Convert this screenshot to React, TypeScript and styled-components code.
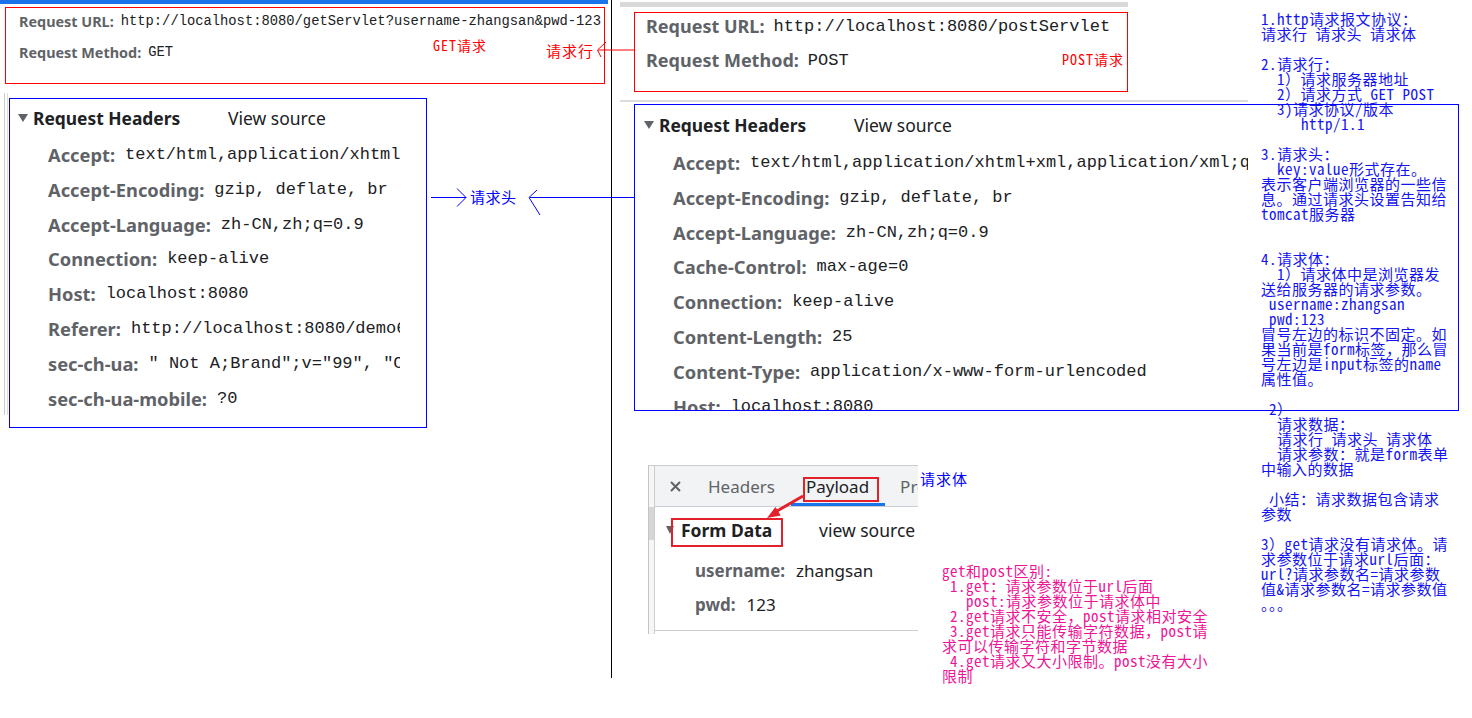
import React from 'react';
import styled, { createGlobalStyle } from 'styled-components';

const UI = `"Noto Sans", "Open Sans", sans-serif`;
const MONO = `"Liberation Mono", "DejaVu Sans Mono", monospace`;
const NOTE = `"Noto Sans Mono CJK SC", "Noto Sans CJK SC", monospace`;

const GlobalStyle = createGlobalStyle`
  html, body { margin: 0; padding: 0; background: #ffffff; }
  body { width: 1472px; height: 718px; overflow: hidden; }
`;

const Canvas = styled.main`
  position: relative;
  width: 1472px;
  height: 718px;
  overflow: hidden;
  background: #fff;
  font-family: ${UI};
`;

/* ---------- request line screenshots ---------- */

const GetUrlShot = styled.section`
  position: absolute;
  left: 0;
  top: 0;
  width: 608px;
  box-sizing: border-box;
  border-top: 4px solid #1a73e8;
  padding: 3px 0 0 5px;
`;

const PostUrlShot = styled.section`
  position: absolute;
  left: 620px;
  top: 2px;
  width: 508px;
  box-sizing: border-box;
  border-top: 5px solid #d9d9d9;
  padding: 5px 0 0 14px;
`;

const UrlFrame = styled.div<{ $small?: boolean }>`
  width: ${p => (p.$small ? 600 : 494)}px;
  height: ${p => (p.$small ? 77 : 80)}px;
  box-sizing: border-box;
  border: 1px solid #ff0000;
  padding: ${p => (p.$small ? '3px 0 0 13px' : '2px 0 0 11px')};
  display: flex;
  flex-direction: column;
  gap: ${p => (p.$small ? 11 : 12)}px;
`;

const UrlRow = styled.div<{ $small?: boolean }>`
  display: flex;
  align-items: center;
  height: ${p => (p.$small ? 20 : 22)}px;
  gap: ${p => (p.$small ? 7 : 9)}px;
  white-space: nowrap;
`;

const UrlLabel = styled.span<{ $small?: boolean }>`
  font: 700 ${p => (p.$small ? 14.4 : 18)}px ${UI};
  color: #5f6368;
`;

const UrlValue = styled.span<{ $small?: boolean }>`
  font: 400 ${p => (p.$small ? 13.8 : 17)}px ${MONO};
  color: #202124;
`;

/* ---------- request headers screenshots ---------- */

const Gutter = styled.div`
  position: absolute;
  left: 4px;
  top: 93px;
  width: 2px;
  height: 322px;
  border-left: 1px solid #c9c9c9;
  border-right: 1px solid #dedede;
`;

const PostEdge = styled.div`
  position: absolute;
  left: 620px;
  top: 100px;
  width: 628px;
  height: 2px;
  background: #dcdcdc;
`;

const HeadersFrame = styled.section<{ $post?: boolean }>`
  position: absolute;
  left: ${p => (p.$post ? 634 : 9)}px;
  top: ${p => (p.$post ? 104 : 98)}px;
  width: ${p => (p.$post ? 825 : 418)}px;
  height: ${p => (p.$post ? 307 : 330)}px;
  box-sizing: border-box;
  border: 1px solid #0000ff;
  overflow: hidden;
`;

const HeadingRow = styled.div<{ $h: number; $pad: number }>`
  display: flex;
  align-items: center;
  height: ${p => p.$h}px;
  padding-left: ${p => p.$pad}px;
  white-space: nowrap;
`;

const Caret = styled.span<{ $w: number; $gap?: number }>`
  width: 0;
  height: 0;
  border-left: ${p => p.$w / 2}px solid transparent;
  border-right: ${p => p.$w / 2}px solid transparent;
  border-top: 8px solid #5f6368;
  margin-right: ${p => p.$gap ?? 5}px;
`;

const SectionTitle = styled.span<{ $w: number }>`
  width: ${p => p.$w}px;
  font: 700 17.4px ${UI};
  color: #202124;
`;

const SourceLink = styled.span`
  font: 400 17.5px ${UI};
  color: #202124;
`;

const HeaderRow = styled.div<{ $w: number }>`
  display: flex;
  align-items: center;
  height: 34.85px;
  width: ${p => p.$w}px;
  padding-left: 38px;
  box-sizing: border-box;
  gap: 10px;
  white-space: nowrap;
  overflow: hidden;
`;

const HeaderName = styled.span`
  font: 700 18.3px ${UI};
  color: #5f6368;
  flex: none;
`;

const HeaderValue = styled.span`
  font: 400 17px ${MONO};
  color: #202124;
`;

/* ---------- payload screenshot ---------- */

const PayloadShot = styled.section`
  position: absolute;
  left: 648px;
  top: 465px;
  width: 270px;
  height: 168px;
  display: flex;
  border-top: 1px solid #cacdd1;
  overflow: hidden;
`;

const ScrollTrack = styled.div`
  width: 7px;
  flex: none;
  border-left: 1px solid #c4c4c4;
  border-right: 1px solid #cacdd1;
  background: #f6f6f6;
  padding-top: 41px;
  box-sizing: border-box;
`;

const ScrollThumb = styled.div`
  height: 33px;
  background: #d6d6d6;
`;

const PayloadMain = styled.div`
  flex: 1;
  min-width: 0;
  display: flex;
  flex-direction: column;
`;

const TabBar = styled.div`
  display: flex;
  align-items: stretch;
  height: 41px;
  box-sizing: border-box;
  background: #f1f3f4;
  border-bottom: 1px solid #cacdd1;
  padding-left: 15px;
  white-space: nowrap;
  overflow: hidden;
`;

const CloseBtn = styled.span`
  display: flex;
  align-items: center;
  margin-right: 12px;
`;

const Tab = styled.span<{ $active?: boolean }>`
  display: flex;
  align-items: center;
  padding: 3px 16px 0 15px;
  font: 400 17px ${UI};
  color: ${p => (p.$active ? '#202124' : '#5f6368')};
  border-bottom: 3px solid ${p => (p.$active ? '#1a73e8' : 'transparent')};
`;

const FormBody = styled.div`
  padding-bottom: 9px;
  border-bottom: 1px solid #cacdd1;
`;

const FormTitle = styled(SectionTitle)`
  font-size: 17.5px;
`;

const FieldRow = styled.div`
  display: flex;
  align-items: center;
  height: 34px;
  padding-left: 40px;
  gap: 11px;
  white-space: nowrap;
`;

const FieldName = styled.span`
  font: 700 17px ${UI};
  color: #5f6368;
`;

const FieldValue = styled.span`
  font: 400 17px ${UI};
  color: #202124;
`;

/* ---------- annotations ---------- */

const Divider = styled.div`
  position: absolute;
  left: 611px;
  top: 0;
  width: 1px;
  height: 678px;
  background: #000;
`;

const Annotation = styled.span<{ $x: number; $y: number; $color: string; $size: number; $spacing: number }>`
  position: absolute;
  left: ${p => p.$x}px;
  top: ${p => p.$y}px;
  font: 400 ${p => p.$size}px ${NOTE};
  letter-spacing: ${p => p.$spacing}px;
  line-height: 16px;
  color: ${p => p.$color};
  white-space: pre;
`;

const MarkBox = styled.div<{ $x: number; $y: number; $w: number; $h: number }>`
  position: absolute;
  left: ${p => p.$x}px;
  top: ${p => p.$y}px;
  width: ${p => p.$w}px;
  height: ${p => p.$h}px;
  box-sizing: border-box;
  border: 2px solid #e3212b;
`;

const Connector = styled.svg<{ $x: number; $y: number }>`
  position: absolute;
  left: ${p => p.$x}px;
  top: ${p => p.$y}px;
  overflow: visible;
`;

const NoteBlock = styled.pre<{ $x: number; $y: number; $color: string }>`
  position: absolute;
  left: ${p => p.$x}px;
  top: ${p => p.$y}px;
  margin: 0;
  font: 400 15px ${NOTE};
  letter-spacing: 0.5px;
  line-height: 15px;
  color: ${p => p.$color};
  white-space: pre;
`;

const getHeaders: [string, string][] = [
  ['Accept:', 'text/html,application/xhtml+xml,application/xml;q=0.9'],
  ['Accept-Encoding:', 'gzip, deflate, br'],
  ['Accept-Language:', 'zh-CN,zh;q=0.9'],
  ['Connection:', 'keep-alive'],
  ['Host:', 'localhost:8080'],
  ['Referer:', 'http://localhost:8080/demo6/'],
  ['sec-ch-ua:', '" Not A;Brand";v="99", "Chromium";v="100"'],
  ['sec-ch-ua-mobile:', '?0'],
];

const postHeaders: [string, string][] = [
  ['Accept:', 'text/html,application/xhtml+xml,application/xml;q=0.9,image/avif,image/webp'],
  ['Accept-Encoding:', 'gzip, deflate, br'],
  ['Accept-Language:', 'zh-CN,zh;q=0.9'],
  ['Cache-Control:', 'max-age=0'],
  ['Connection:', 'keep-alive'],
  ['Content-Length:', '25'],
  ['Content-Type:', 'application/x-www-form-urlencoded'],
  ['Host:', 'localhost:8080'],
];

const notes = `1.http请求报文协议：
请求行 请求头 请求体

2.请求行：
  1）请求服务器地址
  2）请求方式 GET POST
  3)请求协议/版本
     http/1.1

3.请求头：
  key:value形式存在。
表示客户端浏览器的一些信
息。通过请求头设置告知给
tomcat服务器


4.请求体：
  1）请求体中是浏览器发
送给服务器的请求参数。
 username:zhangsan
 pwd:123
冒号左边的标识不固定。如
果当前是form标签，那么冒
号左边是input标签的name
属性值。

 2）
  请求数据：
  请求行 请求头 请求体
  请求参数：就是form表单
中输入的数据

 小结：请求数据包含请求
参数

3）get请求没有请求体。请
求参数位于请求url后面：
url?请求参数名=请求参数
值&请求参数名=请求参数值
。。。`;

const diffNote = `get和post区别:
 1.get：请求参数位于url后面
   post:请求参数位于请求体中
 2.get请求不安全，post请求相对安全
 3.get请求只能传输字符数据，post请
求可以传输字符和字节数据
 4.get请求又大小限制。post没有大小
限制`;

const HeadersPanel: React.FC<{ post?: boolean; rows: [string, string][] }> = ({ post, rows }) => (
  <HeadersFrame $post={post}>
    <HeadingRow $h={post ? 40 : 38} $pad={post ? 9 : 8}>
      <Caret $w={10} />
      <SectionTitle $w={195}>Request Headers</SectionTitle>
      <SourceLink>View source</SourceLink>
    </HeadingRow>
    {rows.map(([k, v]) => (
      <HeaderRow key={k} $w={post ? 613 : 390}>
        <HeaderName>{k}</HeaderName>
        <HeaderValue>{v}</HeaderValue>
      </HeaderRow>
    ))}
  </HeadersFrame>
);

export default function App() {
  return (
    <Canvas>
      <GlobalStyle />

      <GetUrlShot>
        <UrlFrame $small>
          <UrlRow $small>
            <UrlLabel $small>Request URL:</UrlLabel>
            <UrlValue $small>http://localhost:8080/getServlet?username-zhangsan&amp;pwd-123</UrlValue>
          </UrlRow>
          <UrlRow $small>
            <UrlLabel $small>Request Method:</UrlLabel>
            <UrlValue $small>GET</UrlValue>
          </UrlRow>
        </UrlFrame>
      </GetUrlShot>

      <PostUrlShot>
        <UrlFrame>
          <UrlRow>
            <UrlLabel>Request URL:</UrlLabel>
            <UrlValue>http://localhost:8080/postServlet</UrlValue>
          </UrlRow>
          <UrlRow>
            <UrlLabel>Request Method:</UrlLabel>
            <UrlValue>POST</UrlValue>
          </UrlRow>
        </UrlFrame>
      </PostUrlShot>

      <Divider />

      <Gutter />
      <HeadersPanel rows={getHeaders} />
      <PostEdge />
      <HeadersPanel post rows={postHeaders} />

      <PayloadShot>
        <ScrollTrack>
          <ScrollThumb />
        </ScrollTrack>
        <PayloadMain>
          <TabBar>
            <CloseBtn>
              <svg width="11" height="11" viewBox="0 0 11 11">
                <path d="M1 1L10 10M10 1L1 10" stroke="#5f6368" strokeWidth="2" />
              </svg>
            </CloseBtn>
            <Tab>Headers</Tab>
            <Tab $active>Payload</Tab>
            <Tab>Preview</Tab>
          </TabBar>
          <FormBody>
            <HeadingRow $h={46} $pad={11}>
              <Caret $w={8} $gap={7} />
              <FormTitle $w={138}>Form Data</FormTitle>
              <SourceLink>view source</SourceLink>
            </HeadingRow>
            <FieldRow>
              <FieldName>username:</FieldName>
              <FieldValue>zhangsan</FieldValue>
            </FieldRow>
            <FieldRow>
              <FieldName>pwd:</FieldName>
              <FieldValue>123</FieldValue>
            </FieldRow>
          </FormBody>
        </PayloadMain>
      </PayloadShot>

      <MarkBox $x={803} $y={477} $w={76} $h={25} />
      <MarkBox $x={671} $y={518} $w={112} $h={29} />

      <Connector $x={760} $y={490} width="50" height="32" viewBox="0 0 50 32">
        <path d="M43 6L17 21" stroke="#e3212b" strokeWidth="3" fill="none" />
        <path d="M7 28L20.7 25.5L15.5 16.9Z" fill="#e3212b" />
      </Connector>

      <Connector $x={594} $y={38} width="42" height="24" viewBox="0 0 42 24">
        <path d="M4 12H40" stroke="#ff0000" strokeWidth="1" fill="none" />
        <path d="M12 4L3.5 12L7 19" stroke="#ff0000" strokeWidth="1" fill="none" />
      </Connector>

      <Connector $x={428} $y={185} width="210" height="35" viewBox="0 0 210 35">
        <path d="M3 12.5H38" stroke="#0000ff" strokeWidth="1" fill="none" />
        <path d="M29 3.5L38 12.5L29 21.5" stroke="#0000ff" strokeWidth="1" fill="none" />
        <path d="M102 12.5H206" stroke="#0000ff" strokeWidth="1" fill="none" />
        <path d="M109 5L101 12.5L112 30" stroke="#0000ff" strokeWidth="1" fill="none" />
      </Connector>

      <Annotation $x={433} $y={37} $color="#ff0000" $size={14} $spacing={1}>GET请求</Annotation>
      <Annotation $x={546} $y={43} $color="#ff0000" $size={15} $spacing={1}>请求行</Annotation>
      <Annotation $x={1062} $y={51} $color="#ff0000" $size={14} $spacing={1}>POST请求</Annotation>
      <Annotation $x={470} $y={189} $color="#0000ff" $size={15} $spacing={0.5}>请求头</Annotation>
      <Annotation $x={920} $y={471} $color="#0000ff" $size={15} $spacing={1}>请求体</Annotation>

      <NoteBlock $x={1261} $y={11} $color="#1414f0">{notes}</NoteBlock>
      <NoteBlock $x={942} $y={563} $color="#ee1496">{diffNote}</NoteBlock>
    </Canvas>
  );
}
